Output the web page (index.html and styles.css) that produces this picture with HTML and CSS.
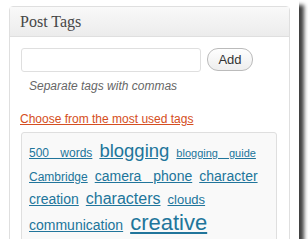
FILE: index.html
```html
<!DOCTYPE html>
<html lang="en">
<head>
  <meta charset="UTF-8" />
  <title>Post Tags</title>
  <link rel="stylesheet" href="styles.css">
</head>
<body>
  <div class="shot">
    <div class="postbox">
      <h3 class="hndle">Post Tags</h3>
      <div class="inside">
        <div class="ajaxtag">
          <input type="text" class="newtag" />
          <button class="button">Add</button>
        </div>
        <p class="howto">Separate tags with commas</p>
        <a href="#" class="tagcloud-link">Choose from the most used tags</a>
        <div class="the-tagcloud">
          <a href="#" style="font-size: 12px">500 words</a>
          <a href="#" style="font-size: 18.5px">blogging</a>
          <a href="#" style="font-size: 11px">blogging guide</a>
          <a href="#" style="font-size: 12px">Cambridge</a>
          <a href="#" style="font-size: 14px">camera phone</a>
          <a href="#" style="font-size: 14px">character</a>
          <a href="#" style="font-size: 14px">creation</a>
          <a href="#" style="font-size: 16px">characters</a>
          <a href="#" style="font-size: 13px">clouds</a>
          <a href="#" style="font-size: 14px">communication</a>
          <a href="#" style="font-size: 22px">creative</a>
          <a href="#" style="font-size: 16px">critique groups</a>
        </div>
      </div>
    </div>
  </div>
</body>
</html>
```

FILE: styles.css
```css
/* marco de la captura */
body {
  margin: 0;
  background: #fff;
  font-family: "Liberation Sans", Arial, sans-serif;
}

.shot {
  width: 299px;
  height: 239px;
  overflow: hidden;
  background: #fff;
  box-shadow: 5px 5px 4px rgba(0, 0, 0, 0.75);
}

/* caja de etiquetas */
.postbox {
  margin: 6px 0 0 9px;
  width: 279px;
  height: 260px;
  border: 1px solid #dfdfdf;
  border-radius: 4px 4px 0 0;
  background: #fff;
}

.hndle {
  margin: 0;
  height: 29px;
  padding-left: 10px;
  border-bottom: 1px solid #dfdfdf;
  background: linear-gradient(#f9f9f9, #ececec);
  font-family: "Liberation Serif", "Times New Roman", serif;
  font-size: 16px;
  font-weight: normal;
  line-height: 29px;
  color: #464646;
}

.inside {
  padding: 10px 0 0 11px;
}

.ajaxtag {
  display: flex;
  align-items: center;
  gap: 6px;
}

.newtag {
  box-sizing: border-box;
  width: 180px;
  height: 24px;
  margin: 1px 0 0 0;
  border: 1px solid #dfdfdf;
  border-radius: 3px;
  background: #fff;
}

.button {
  box-sizing: border-box;
  width: 46px;
  height: 23px;
  padding: 0;
  border: 1px solid #bbb;
  border-radius: 11px;
  background: linear-gradient(#fefefe, #eee);
  font-family: "Liberation Sans", Arial, sans-serif;
  font-size: 13px;
  color: #333;
}

.howto {
  margin: 7px 0 0 8px;
  font-size: 12px;
  font-style: italic;
  line-height: 15px;
  color: #666;
}

.tagcloud-link {
  display: block;
  margin: 18px 0 0 -1px;
  font-size: 12px;
  line-height: 15px;
  color: #d54e21;
}

/* nube de etiquetas */
.the-tagcloud {
  display: flex;
  flex-wrap: wrap;
  align-items: baseline;
  column-gap: 7px;
  row-gap: 4.5px;
  width: 256px;
  height: 120px;
  margin-top: 5px;
  padding: 9px 0 0 7px;
  box-sizing: border-box;
  border: 1px solid #dfdfdf;
  border-radius: 3px;
  background: #f9f9f9;
}

.the-tagcloud a {
  line-height: 18px;
  word-spacing: 8px;
  color: #21759b;
}
```
